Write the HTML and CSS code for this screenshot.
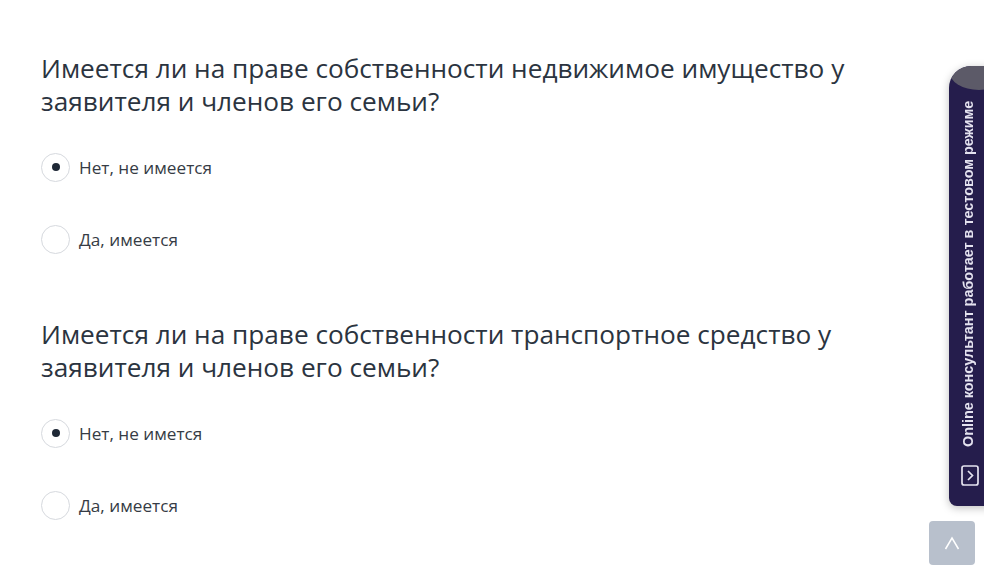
FILE: index.html
```html
<!DOCTYPE html>
<html lang="ru">
<head>
    <meta charset="UTF-8">
    <meta name="viewport" content="width=device-width, initial-scale=1.0">
    <title>Анкета</title>
    <link rel="stylesheet" href="styles.css">
</head>
<body>

<div class="form">
    <div class="question">
        <div class="question-title">Имеется ли на праве собственности недвижимое имущество у заявителя и членов его семьи?</div>
        <label class="option">
            <span class="radio checked"></span>
            <span class="option-text">Нет, не имеется</span>
        </label>
        <label class="option">
            <span class="radio"></span>
            <span class="option-text">Да, имеется</span>
        </label>
    </div>

    <div class="question">
        <div class="question-title">Имеется ли на праве собственности транспортное средство у заявителя и членов его семьи?</div>
        <label class="option">
            <span class="radio checked"></span>
            <span class="option-text">Нет, не имется</span>
        </label>
        <label class="option">
            <span class="radio"></span>
            <span class="option-text">Да, имеется</span>
        </label>
    </div>
</div>

<div class="consultant">
    <div class="consultant-cap"></div>
    <div class="consultant-text">Online консультант работает в тестовом режиме</div>
    <div class="consultant-icon">
        <svg width="18" height="21" viewBox="0 0 18 21">
            <rect x="1" y="1" width="16" height="19" rx="2" fill="none" stroke="#e4e2ef" stroke-width="1.7"/>
            <path d="M7 6 L11.5 10.5 L7 15" fill="none" stroke="#e4e2ef" stroke-width="1.7"/>
        </svg>
    </div>
</div>

<button class="scroll-top">
    <svg width="18" height="14" viewBox="0 0 18 14">
        <path d="M2.5 13 L9 2 L15.5 13" fill="none" stroke="#ffffff" stroke-width="1.5"/>
    </svg>
</button>

</body>
</html>
```

FILE: styles.css
```css
body {
    font-family: 'Open Sans', sans-serif;
    background-color: #ffffff;
    margin: 0;
    color: #2b3440;
}
.form {
    padding: 52px 0 0 41px;
    width: 850px;
}
.question {
    margin-bottom: 64px;
}
.question-title {
    font-size: 26.2px;
    line-height: 33px;
    margin-bottom: 34px;
}
.option {
    display: flex;
    align-items: center;
    height: 30px;
    margin-bottom: 42px;
}
.option:last-child {
    margin-bottom: 0;
}
.radio {
    width: 29px;
    height: 29px;
    border: 1px solid #d6d9de;
    border-radius: 50%;
    box-sizing: border-box;
    display: flex;
    justify-content: center;
    align-items: center;
    margin-right: 9px;
    background: #fff;
}
.radio.checked::after {
    content: '';
    width: 8px;
    height: 8px;
    border-radius: 50%;
    background: #1e2836;
}
.option-text {
    font-size: 17.2px;
    color: #363c45;
}
.consultant {
    position: fixed;
    right: -12px;
    top: 66px;
    width: 47px;
    height: 440px;
    background: #251d4c;
    border-radius: 22px 0 0 8px;
    box-shadow: 0 2px 8px rgba(0, 0, 0, 0.25);
    overflow: hidden;
    display: flex;
    flex-direction: column;
    align-items: flex-start;
}
.consultant-cap {
    position: absolute;
    top: -14px;
    left: 0;
    width: 60px;
    height: 38px;
    background: #5c5a68;
    border-radius: 0 0 50% 50%;
}
.consultant-text {
    writing-mode: vertical-rl;
    transform: rotate(180deg);
    font-family: 'Liberation Sans', Arial, sans-serif;
    font-size: 14.4px;
    font-weight: bold;
    color: #e4e2ef;
    margin: 37px 0 0 11px;
    height: 344px;
    text-align: left;
    white-space: nowrap;
}
.consultant-icon {
    margin: 18px 0 0 12px;
    line-height: 0;
}
.scroll-top {
    position: fixed;
    left: 929px;
    top: 521px;
    width: 46px;
    height: 44px;
    border: none;
    border-radius: 4px;
    background: #b8c0cc;
    display: flex;
    justify-content: center;
    align-items: center;
    padding: 0;
}
```
